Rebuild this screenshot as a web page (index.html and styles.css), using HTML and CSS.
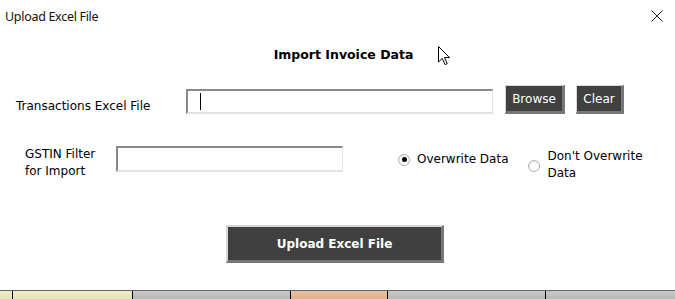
FILE: index.html
```html
<!DOCTYPE html>
<html lang="en">
<head>
    <meta charset="UTF-8">
    <meta name="viewport" content="width=device-width, initial-scale=1.0">
    <title>Upload Excel File</title>
    <link rel="stylesheet" href="styles.css">
</head>
<body>
    <div class="dialog">
        <div class="titlebar">
            <span class="title">Upload Excel File</span>
            <svg class="close" width="12" height="12" viewBox="0 0 12 12">
                <path d="M0.5 0.5 L11.5 11.5 M11.5 0.5 L0.5 11.5" stroke="#222" stroke-width="1" fill="none"/>
            </svg>
        </div>

        <h2 class="heading">Import Invoice Data</h2>

        <div class="row file-row">
            <label class="label file-label">Transactions Excel File</label>
            <div class="textbox file-box"><span class="caret"></span></div>
            <button class="btn browse">Browse</button>
            <button class="btn clear">Clear</button>
        </div>

        <div class="row filter-row">
            <label class="label gstin-label">GSTIN Filter<br>for Import</label>
            <div class="textbox gstin-box"></div>
            <div class="option opt-overwrite"><span class="radio checked"></span><span>Overwrite Data</span></div>
            <div class="option opt-keep"><span class="radio"></span><span>Don't Overwrite<br>Data</span></div>
        </div>

        <div class="actions">
            <button class="btn upload">Upload Excel File</button>
        </div>

        <div class="sheet-tabs">
            <span class="tab tab-a"></span>
            <span class="tab tab-b"></span>
            <span class="tab tab-c"></span>
            <span class="tab tab-d"></span>
            <span class="tab tab-c"></span>
            <span class="tab tab-e"></span>
        </div>

        <svg class="pointer" width="13" height="20" viewBox="0 0 13 20">
            <path d="M0.5 0.5 L0.5 16 L4.2 12.4 L7 18.6 L9.2 17.6 L6.5 11.6 L11.5 11.6 Z" fill="#fff" stroke="#000" stroke-width="1" stroke-linejoin="miter"/>
        </svg>
    </div>
</body>
</html>
```

FILE: styles.css
```css
body {
    margin: 0;
    padding: 0;
    background-color: white;
    font-family: "DejaVu Sans", Verdana, sans-serif;
    color: #000;
}
.dialog {
    position: relative;
    width: 675px;
    height: 299px;
    overflow: hidden;
}
.titlebar {
    height: 32px;
    display: flex;
    justify-content: space-between;
    align-items: center;
    padding: 0 12px 0 5px;
}
.title {
    font-family: "Noto Sans", "Open Sans", sans-serif;
    font-size: 12.5px;
    letter-spacing: -0.3px;
    color: #111;
}
.close {
    display: block;
}
.heading {
    margin: 0;
    padding: 15px 0 0 12px;
    height: 16px;
    line-height: 16px;
    text-align: center;
    font-size: 12.5px;
    font-weight: bold;
}
.row {
    display: flex;
}
.label {
    font-size: 12px;
    line-height: 17px;
}
.file-row {
    margin-top: 22px;
    height: 29px;
    align-items: flex-end;
}
.file-label {
    width: 186px;
    box-sizing: border-box;
    padding-left: 16px;
    align-self: center;
    padding-top: 13px;
}
.textbox {
    box-sizing: border-box;
    background-color: white;
    border-top: 2px solid #8a8a8a;
    border-left: 2px solid #8a8a8a;
    border-right: 1px solid #e2e2e2;
    border-bottom: 2px solid #e2e2e2;
}
.file-box {
    width: 307px;
    height: 25px;
    padding: 2px 0 0 12px;
}
.caret {
    display: block;
    width: 1px;
    height: 17px;
    background-color: #000;
}
.btn {
    box-sizing: border-box;
    background-color: #404040;
    color: white;
    font-family: "DejaVu Sans", Verdana, sans-serif;
    font-size: 12px;
    padding: 0;
    border-style: solid;
    border-color: #d6d6d6 #777 #777 #d6d6d6;
    border-width: 1px 3px 3px 1px;
    cursor: pointer;
}
.browse {
    width: 60px;
    height: 29px;
    margin-left: 12px;
}
.clear {
    width: 48px;
    height: 29px;
    margin-left: 11px;
}
.filter-row {
    margin-top: 31px;
    align-items: flex-start;
}
.gstin-label {
    box-sizing: border-box;
    padding-left: 25px;
    width: 116px;
    padding-top: 1px;
}
.gstin-box {
    width: 227px;
    height: 26px;
    margin-top: 1px;
}
.option {
    display: flex;
    align-items: center;
    font-size: 12px;
    line-height: 17px;
}
.opt-overwrite {
    margin-left: 55px;
    margin-top: 6px;
}
.opt-keep {
    margin-left: 19px;
    margin-top: 3px;
}
.radio {
    box-sizing: border-box;
    width: 12px;
    height: 12px;
    border-radius: 50%;
    border: 1px solid #b0b0b0;
    background: radial-gradient(circle at 60% 60%, #fff 40%, #e6e6e6 100%);
    margin-right: 7px;
    display: flex;
    justify-content: center;
    align-items: center;
}
.opt-keep .radio {
    margin-top: 2px;
    margin-right: 8px;
}
.radio.checked::after {
    content: "";
    width: 5px;
    height: 5px;
    border-radius: 50%;
    background-color: #000;
}
.actions {
    margin-top: 43px;
    display: flex;
    justify-content: center;
    padding-right: 5px;
}
.upload {
    width: 218px;
    height: 38px;
    font-weight: bold;
    font-size: 12px;
    border-width: 2px 3px 3px 2px;
}
.sheet-tabs {
    margin-top: 27px;
    height: 9px;
    border-top: 1px solid #666;
    display: flex;
}
.tab {
    height: 9px;
    border-left: 1px solid #000;
    background: linear-gradient(#c9c9c9, #b5b5b5);
    width: 157px;
}
.tab-a {
    width: 12px;
    border-left: none;
    background: linear-gradient(#eeecc6, #e3e1b3);
}
.tab-b {
    width: 119px;
    background: linear-gradient(#eeecc6, #e3e1b3);
}
.tab-d {
    width: 96px;
    background: linear-gradient(#e8c2a4, #dcae8c);
}
.tab-e {
    flex: 1;
}
.pointer {
    position: absolute;
    left: 438px;
    top: 46px;
}
```
